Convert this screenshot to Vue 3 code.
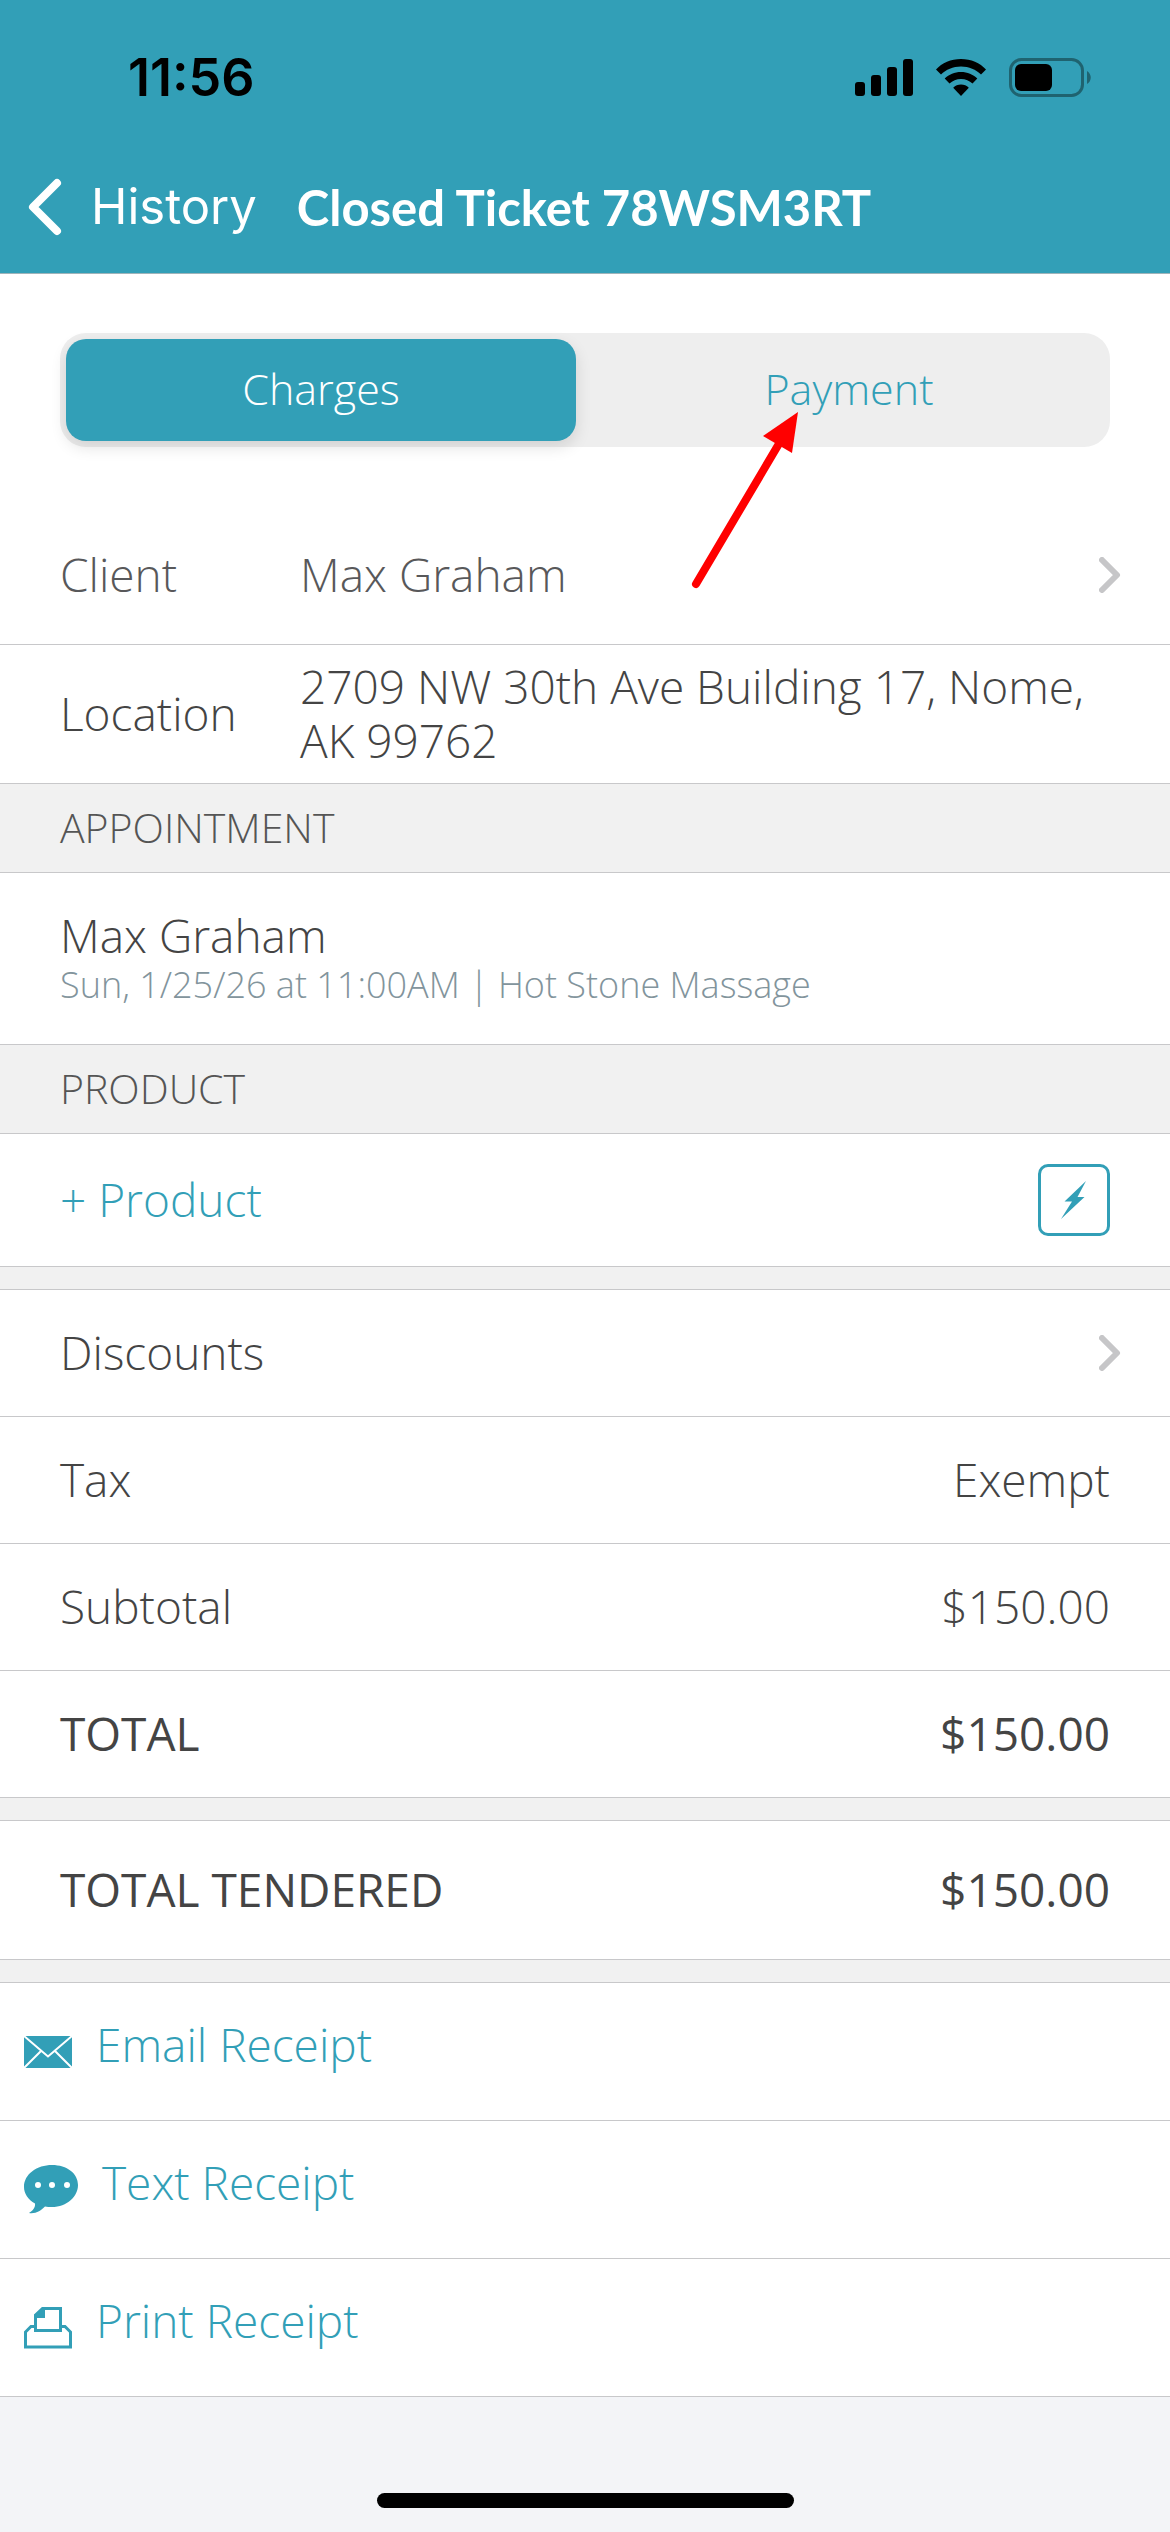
<script setup>
import { ref } from 'vue'

const tab = ref('charges')

const client = 'Max Graham'
const location = '2709 NW 30th Ave Building 17, Nome, AK 99762'

const appointments = [
  { id: 1, name: 'Max Graham', detail: 'Sun, 1/25/26 at 11:00AM | Hot Stone Massage' },
]

const amounts = [
  { label: 'Tax', value: 'Exempt' },
  { label: 'Subtotal', value: '$150.00' },
  { label: 'TOTAL', value: '$150.00', strong: true },
]
</script>

<template>
  <div class="screen">
    <header class="header">
      <div class="status">
        <span class="time">11:56</span>
        <span class="indicators">
          <svg width="58" height="38" viewBox="0 0 58 38" aria-hidden="true">
            <rect x="0" y="23" width="10" height="14" rx="3" />
            <rect x="16" y="16" width="10" height="21" rx="3" />
            <rect x="32" y="8" width="10" height="29" rx="3" />
            <rect x="48" y="0" width="10" height="37" rx="3" />
          </svg>
          <svg width="52" height="38" viewBox="0 0 52 38" aria-hidden="true">
            <path d="M26 0C36 0 45 4 51 10.500L46 15.500C41 10.500 34 7.500 26 7.500S11 10.500 6 15.500L1 10.500C7 4 16 0 26 0Z" />
            <path d="M26 13C32.500 13 38 15.500 42.300 19.500L37.500 24.500C34.500 21.800 30.500 20 26 20S17.500 21.800 14.500 24.500L9.700 19.500C14 15.500 19.500 13 26 13Z" />
            <path d="M26 25.500C29 25.500 31.700 26.500 33.800 28.800L26 37L18.200 28.800C20.300 26.500 23 25.500 26 25.500Z" />
          </svg>
          <svg width="83" height="40" viewBox="0 0 83 40" aria-hidden="true">
            <rect x="1.500" y="1.500" width="72" height="36" rx="11" fill="none" stroke="#1f6370" stroke-width="3" />
            <rect x="6" y="6" width="37" height="27" rx="6" />
            <path d="M78 13C83 16 83 23 78 26Z" fill="#1f6370" />
          </svg>
        </span>
      </div>
      <nav class="nav">
        <button class="back" type="button">
          <svg width="34" height="58" viewBox="0 0 34 58" aria-hidden="true">
            <path d="M29 5L5 29L29 53" fill="none" stroke="#fff" stroke-width="8" stroke-linecap="round" stroke-linejoin="round" />
          </svg>
          <span>History</span>
        </button>
        <h1 class="title">Closed Ticket 78WSM3RT</h1>
      </nav>
    </header>

    <main>
      <div class="tabs" role="tablist">
        <button class="tab" :class="{ active: tab === 'charges' }" type="button" role="tab" :aria-selected="tab === 'charges'" @click="tab = 'charges'">Charges</button>
        <button class="tab" :class="{ active: tab === 'payment' }" type="button" role="tab" :aria-selected="tab === 'payment'" @click="tab = 'payment'">
          Payment
          <svg class="pointer" width="110" height="182" viewBox="0 0 110 182" aria-hidden="true">
            <path d="M6 175L90 33" stroke="#f00" stroke-width="8" stroke-linecap="round" />
            <path d="M108 3L102 44L73 27Z" fill="#f00" />
          </svg>
        </button>
      </div>

      <button class="row row-tall muted" type="button">
        <span class="label">Client</span>
        <span class="field">{{ client }}</span>
        <svg class="chevron" width="22" height="36" viewBox="0 0 22 36" aria-hidden="true"><path d="M3 3L18 18L3 33" /></svg>
      </button>
      <div class="row row-tall">
        <span class="label">Location</span>
        <span class="field">{{ location }}</span>
      </div>

      <h2 class="section">APPOINTMENT</h2>
      <div v-for="item in appointments" :key="item.id" class="appointment">
        <span>{{ item.name }}</span>
        <span class="detail">{{ item.detail }}</span>
      </div>

      <h2 class="section">PRODUCT</h2>
      <div class="row row-product">
        <button class="link" type="button">+ Product</button>
        <button class="quick" type="button" aria-label="Quick add product">
          <svg width="66" height="66" viewBox="3 3 66 66" aria-hidden="true">
            <path d="M48 17L39.500 33H46.500L23 55L34 37.500H26.500Z" fill="#329fb7" />
          </svg>
        </button>
      </div>
      <div class="spacer"></div>

      <button class="row" type="button">
        <span>Discounts</span>
        <svg class="chevron" width="22" height="36" viewBox="0 0 22 36" aria-hidden="true"><path d="M3 3L18 18L3 33" /></svg>
      </button>
      <div v-for="line in amounts" :key="line.label" class="row" :class="{ strong: line.strong }">
        <span>{{ line.label }}</span>
        <span>{{ line.value }}</span>
      </div>
      <div class="spacer"></div>

      <div class="row row-tall strong">
        <span>TOTAL TENDERED</span>
        <span>$150.00</span>
      </div>
      <div class="spacer"></div>

      <button class="row receipt" type="button">
        <svg width="48" height="32" viewBox="0 0 48 32" aria-hidden="true">
          <rect width="48" height="32" fill="#329fb7" />
          <path d="M0 0L17 14.500L24 20.500L31 14.500L48 0M0 32L17 15M48 32L31 15" fill="none" stroke="#fff" stroke-width="2" />
        </svg>
        <span>Email Receipt</span>
      </button>
      <button class="row receipt" type="button">
        <svg width="54" height="49" viewBox="0 0 54 49" aria-hidden="true">
          <path d="M28 0C43 0 54 8.500 54 20S43 42 28 42C25.500 42 23 41.900 21 41.500C17 45.500 12 49 5 48C9 45.500 11.500 42.500 11 38.500C4 34.500 0 28.500 0 22C0 9 13 0 28 0Z" fill="#329fb7" />
          <circle cx="14" cy="20" r="3" fill="#fff" />
          <circle cx="28" cy="20" r="3" fill="#fff" />
          <circle cx="43" cy="20" r="3" fill="#fff" />
        </svg>
        <span>Text Receipt</span>
      </button>
      <button class="row receipt" type="button">
        <svg width="48" height="42" viewBox="0 0 48 42" aria-hidden="true">
          <path d="M11 19.500H7L1.500 25V40H46.500V25L41 19.500H37" fill="none" stroke="#329fb7" stroke-width="3" />
          <path d="M11.500 8L18.500 1.500H36.500V23.500H11.500Z" fill="none" stroke="#329fb7" stroke-width="3" />
          <path d="M11 8L18 1H21V11H11Z" fill="#329fb7" />
        </svg>
        <span>Print Receipt</span>
      </button>
    </main>

    <footer class="footer">
      <div class="home-bar"></div>
    </footer>
  </div>
</template>

<style>
body {
  margin: 0;
}
</style>

<style scoped>
.screen {
  display: flex;
  flex-direction: column;
  min-height: 100vh;
  background: #fff;
  color: #444;
  font-family: "Open Sans", "Noto Sans", sans-serif;
  font-size: 46px;
  font-weight: 300;
  line-height: 54px;
}

button {
  margin: 0;
  padding: 0;
  border: 0;
  background: none;
  color: inherit;
  font: inherit;
  text-align: left;
}

svg {
  display: block;
  flex: none;
}

.header {
  background: #329fb7;
  border-bottom: 1px solid #9fb4ba;
}

.status {
  display: flex;
  align-items: center;
  justify-content: space-between;
  height: 156px;
  padding: 0 78px 0 128px;
  font-family: Inter, sans-serif;
  font-size: 52px;
  font-weight: 600;
  color: #000;
}

.indicators {
  display: flex;
  align-items: center;
  gap: 22px;
}

.nav {
  display: flex;
  align-items: center;
  gap: 40px;
  height: 102px;
  padding: 0 28px 15px;
  color: #fff;
}

.back {
  display: flex;
  align-items: center;
  gap: 29px;
  font-family: Inter, sans-serif;
  font-size: 49px;
  font-weight: 400;
}

.title {
  margin: 0;
  font-family: Lato, sans-serif;
  font-size: 49px;
  font-weight: 700;
}

.tabs {
  display: grid;
  grid-template-columns: 1fr 1fr;
  gap: 18px;
  margin: 59px 60px;
  padding: 6px;
  border-radius: 26px;
  background: #eee;
}

.tab {
  position: relative;
  height: 102px;
  padding-bottom: 3px;
  border-radius: 20px;
  color: #329fb7;
  font-size: 43px;
  text-align: center;
}

.tab.active {
  background: #329fb7;
  box-shadow: 0 6px 16px rgba(0, 0, 0, 0.12);
  color: #fff;
}

.pointer {
  position: absolute;
  top: 70px;
  left: 96px;
  z-index: 1;
}

.row {
  display: flex;
  align-items: center;
  justify-content: space-between;
  box-sizing: border-box;
  width: 100%;
  min-height: 127px;
  padding: 0 60px;
  border-bottom: 1px solid #c8c8ca;
}

.row > span,
.link {
  padding-bottom: 2px;
}

.row-tall {
  min-height: 139px;
}

.row-product {
  min-height: 133px;
}

.muted {
  color: #58585a;
}

.label {
  width: 240px;
  flex: none;
}

.field {
  flex: 1;
}

.chevron {
  margin-right: -11px;
  fill: none;
  stroke: #c6c6c8;
  stroke-width: 6px;
  stroke-linecap: round;
  stroke-linejoin: round;
}

.strong {
  font-weight: 500;
}

.section {
  margin: 0;
  padding: 16px 60px 18px;
  border-bottom: 1px solid #c8c8ca;
  background: #f1f1f1;
  color: #555;
  font-size: 41px;
  font-weight: 300;
}

.appointment {
  display: flex;
  flex-direction: column;
  justify-content: center;
  min-height: 169px;
  padding: 0 60px 2px;
  border-bottom: 1px solid #c8c8ca;
}

.detail {
  color: #82949c;
  font-size: 36px;
  line-height: 46px;
}

.link {
  color: #329fb7;
}

.quick {
  border: 3px solid #329fb7;
  border-radius: 10px;
}

.spacer {
  height: 22px;
  border-bottom: 1px solid #c8c8ca;
  background: #f1f1f1;
}

.receipt {
  justify-content: flex-start;
  gap: 24px;
  min-height: 138px;
  padding: 0 24px;
  color: #329fb7;
}

.receipt > span {
  padding-bottom: 15px;
}

.footer {
  display: flex;
  flex: 1;
  align-items: flex-end;
  justify-content: center;
  padding: 24px;
  background: #f3f4f7;
}

.home-bar {
  width: 417px;
  height: 15px;
  border-radius: 8px;
  background: #000;
}
</style>
